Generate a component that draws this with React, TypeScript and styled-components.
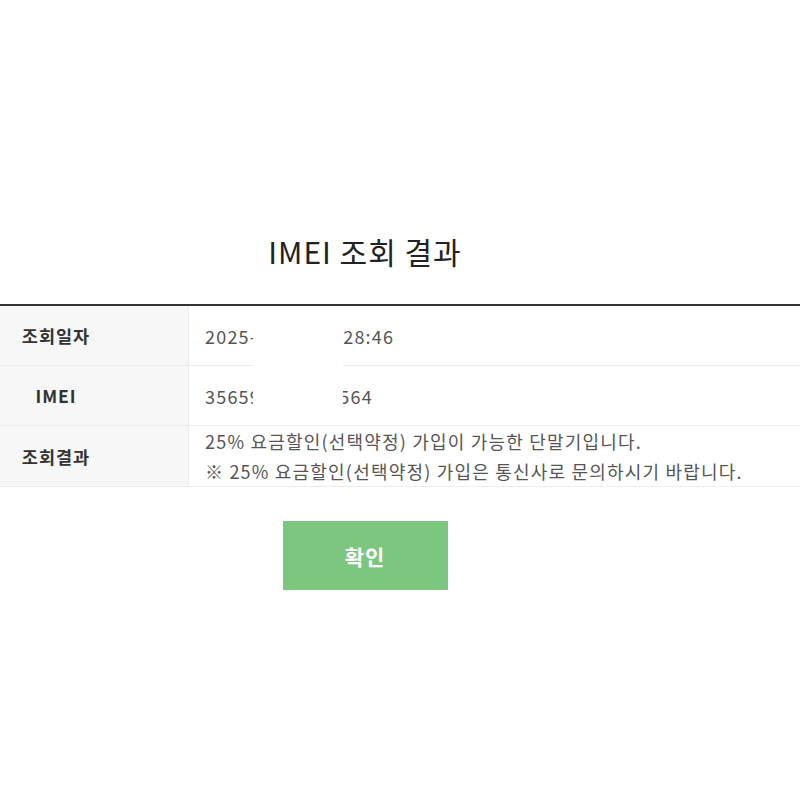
import React from "react";
import styled, { createGlobalStyle } from "styled-components";

const Global = createGlobalStyle`
  html, body { margin: 0; padding: 0; background: #fff; overflow: hidden; }
  body { font-family: "Noto Sans CJK KR", "Noto Sans", sans-serif; }
`;

const Page = styled.div`
  width: 730px;
  padding-top: 229px;
  display: flex;
  flex-direction: column;
  align-items: center;
`;

const Title = styled.h2`
  margin: 0;
  font-size: 30px;
  line-height: 44px;
  font-weight: 400;
  color: #222;
  letter-spacing: 1px;
`;

const TableWrap = styled.div`
  position: relative;
  align-self: flex-start;
  margin-top: 31px;
  width: 900px;
`;

const Table = styled.table`
  width: 100%;
  border-collapse: collapse;
  border-top: 2px solid #333;
`;

const Row = styled.tr`
  border-bottom: 1px solid #ececec;
`;

const Th = styled.th<{ $h?: number }>`
  width: 72px;
  padding: 0 96px 0 20px;
  background: #f7f7f7;
  border-right: 1px solid #ececec;
  font-size: 17.5px;
  letter-spacing: 1px;
  font-weight: 700;
  color: #333;
  text-align: center;
  white-space: nowrap;
  height: ${(p) => p.$h ?? 59}px;
`;

const Td = styled.td`
  padding: 0 0 0 16px;
  font-size: 18px;
  letter-spacing: 1.2px;
  color: #555;
  line-height: 30px;
  text-align: left;
  white-space: nowrap;
`;

const Mask = styled.div`
  position: absolute;
  left: 253px;
  top: 4px;
  width: 90px;
  height: 114px;
  background: #fff;
`;

const Button = styled.button`
  margin-top: 34px;
  width: 165px;
  height: 69px;
  border: none;
  background: #7dc67f;
  color: #fff;
  font-family: inherit;
  font-size: 21px;
  letter-spacing: 1px;
  font-weight: 700;
  cursor: pointer;
`;

export default function App() {
  return (
    <>
      <Global />
      <Page>
        <Title>IMEI 조회 결과</Title>
        <TableWrap>
          <Table>
            <tbody>
              <Row>
                <Th>조회일자</Th>
                <Td>2025-08-14 15:28:46</Td>
              </Row>
              <Row>
                <Th>IMEI</Th>
                <Td>356591234567564</Td>
              </Row>
              <Row>
                <Th $h={60}>조회결과</Th>
                <Td>
                  25% 요금할인(선택약정) 가입이 가능한 단말기입니다.
                  <br />※ 25% 요금할인(선택약정) 가입은 통신사로 문의하시기 바랍니다.
                </Td>
              </Row>
            </tbody>
          </Table>
          <Mask />
        </TableWrap>
        <Button>확인</Button>
      </Page>
    </>
  );
}
